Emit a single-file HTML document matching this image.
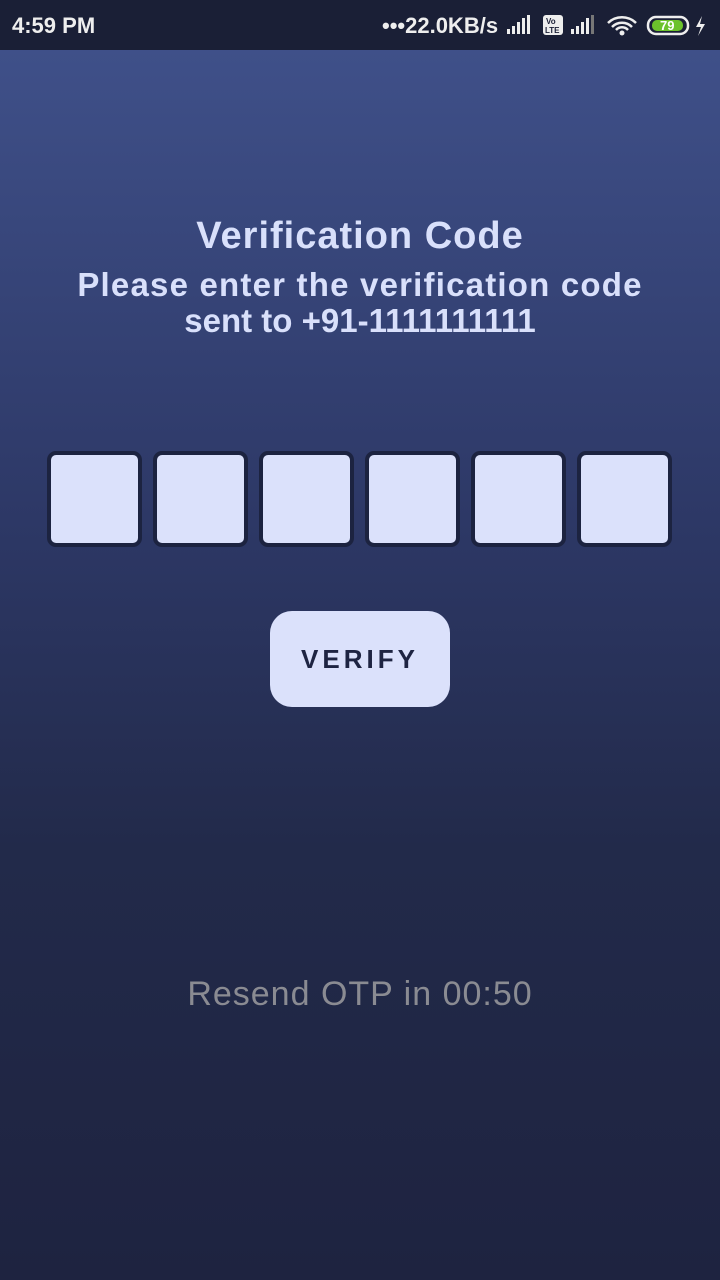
<!DOCTYPE html>
<html><head><meta charset="utf-8"><style>
body{margin:0;width:720px;height:1280px;overflow:hidden;font-family:"Liberation Sans",sans-serif;}
.bg{position:absolute;top:0;left:0;width:720px;height:1280px;background:linear-gradient(#3f5089 50px,#2d3866 520px,#222a4a 850px,#1e2340 1280px);}
.sb{position:absolute;top:0;left:0;width:720px;height:50px;background:#1a1f36;color:#eee;font-size:22px;font-weight:bold;}
.t{position:absolute;width:720px;text-align:center;color:#d9e0fb;font-weight:bold;}
.box{position:absolute;top:451px;width:87px;height:88px;background:#dbe1fb;border:4px solid #1c2340;border-radius:9px;}
.btn{position:absolute;left:270px;top:611px;width:180px;height:96px;background:#dbe1fb;border-radius:22px;text-align:center;line-height:96px;color:#1e2442;font-weight:bold;font-size:26px;letter-spacing:4px;}
</style></head><body>
<div class="bg"></div>
<div class="sb"><span style="position:absolute;left:12px;top:13px">4:59 PM</span>
<span style="position:absolute;left:382px;top:13px">•••22.0KB/s</span>
<svg style="position:absolute;left:505px;top:14px" width="210" height="24">
<g fill="#eee"><rect x="2" y="15" width="3" height="5"/><rect x="7" y="12" width="3" height="8"/><rect x="12" y="8" width="3" height="12"/><rect x="17" y="4" width="3" height="16"/><rect x="22" y="1" width="3" height="19"/>
<rect x="38" y="1" width="20" height="20" rx="3"/>
<rect x="66" y="15" width="3" height="5"/><rect x="71" y="12" width="3" height="8"/><rect x="76" y="8" width="3" height="12"/><rect x="81" y="4" width="3" height="16"/><rect x="86" y="1" width="3" height="19" fill="#777"/>
<circle cx="117" cy="19" r="2.5"/></g>
<text x="41" y="10" font-size="8" font-weight="bold" fill="#1a1f36" font-family="Liberation Sans">Vo</text>
<text x="40" y="19" font-size="8" font-weight="bold" fill="#1a1f36" font-family="Liberation Sans">LTE</text>
<g fill="none" stroke="#eee" stroke-width="2.5"><path d="M103 9a20 20 0 0 1 28 0"/><path d="M107 13a14 14 0 0 1 20 0"/><path d="M111 16a8 8 0 0 1 12 0"/>
<rect x="143" y="3" width="40" height="17" rx="8"/></g>
<rect x="147" y="6" width="31" height="11" rx="5" fill="#6cc22c"/>
<text x="155" y="16" font-size="13" font-weight="bold" fill="#fff" font-family="Liberation Sans">79</text>
<path d="M197 2l-6 11h5l-3 9 7-12h-5z" fill="#eee"/>
</svg></div>
<div class="t" style="top:215px;font-size:38px;letter-spacing:1px">Verification Code</div>
<div class="t" style="top:267px;font-size:33px;line-height:36px;letter-spacing:1.2px">Please enter the verification code</div>
<div class="t" style="top:303px;font-size:33px;line-height:36px;letter-spacing:0px">sent to +91-1111111111</div>
<div class="box" style="left:47px"></div><div class="box" style="left:153px"></div><div class="box" style="left:259px"></div><div class="box" style="left:365px"></div><div class="box" style="left:471px"></div><div class="box" style="left:577px"></div>
<div class="btn">VERIFY</div>
<div class="t" style="top:975px;font-size:34px;color:#8a8b92;font-weight:normal;letter-spacing:1px">Resend OTP in 00:50</div>
</body></html>
